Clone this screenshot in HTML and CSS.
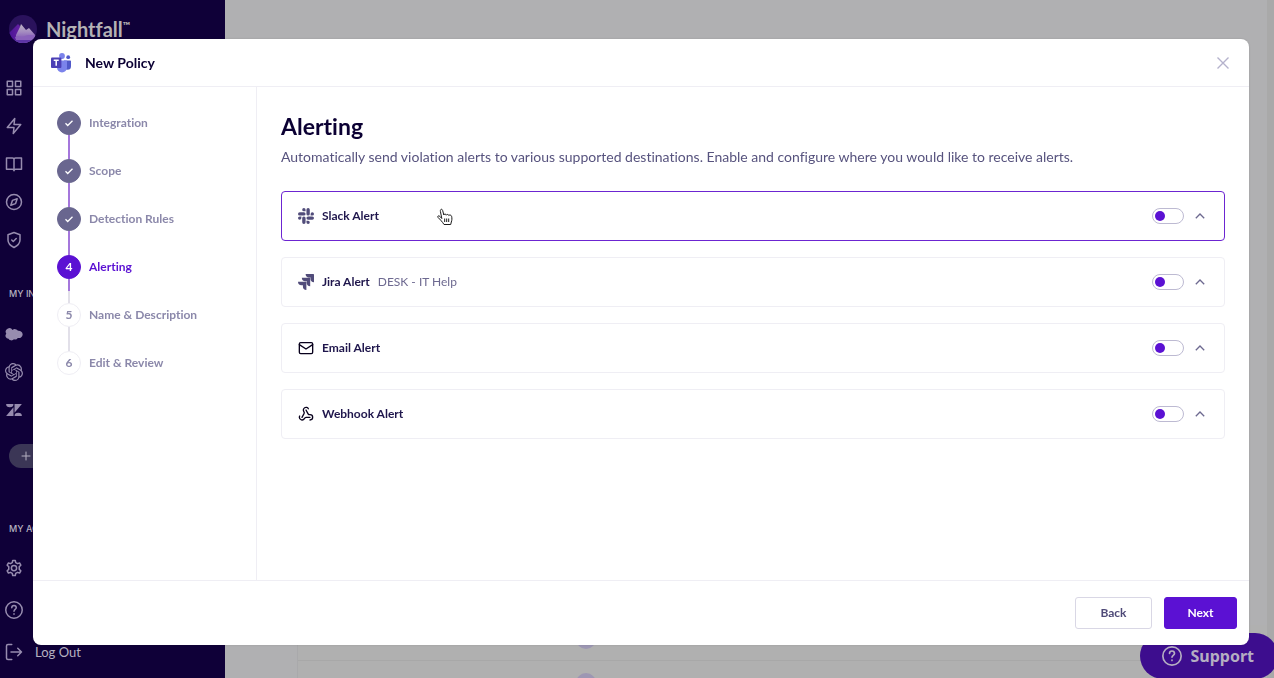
FILE: index.html
```html
<!DOCTYPE html>
<html lang="en">
<head>
<meta charset="utf-8">
<meta name="viewport" content="width=device-width, initial-scale=1">
<title>Nightfall – New Policy</title>
<link rel="stylesheet" href="styles.css">
</head>
<body>
<div class="app">
  <aside class="sidebar">
    <a class="brand" href="#">
      <svg class="brand-mark" viewBox="0 0 28 28" aria-hidden="true">
        <defs>
          <clipPath id="disc"><circle cx="14" cy="14" r="14"/></clipPath>
          <linearGradient id="peak" x1="0" y1="0" x2="0" y2="1"><stop offset="0" stop-color="#bdb5c4"/><stop offset="0.5" stop-color="#a48bc0"/><stop offset="1" stop-color="#7d4fb4"/></linearGradient>
          <linearGradient id="ridge" x1="0" y1="0" x2="1" y2="0"><stop offset="0" stop-color="#4a1596"/><stop offset="1" stop-color="#7a2bab"/></linearGradient>
        </defs>
        <g clip-path="url(#disc)">
          <rect width="28" height="28" fill="#2a125c"/>
          <path d="M0 18 9 9l3 3 8 6v10H0z" fill="url(#ridge)"/>
          <path d="m7 20 4-8 1-3 5 6 3-2 7 8-1 4H7z" fill="url(#peak)"/>
          <path d="M6 22c4-2 6 1 10-1s6 0 10-1l-1 8H8z" fill="#8a62bb"/>
          <path d="M6 25h19v3H6z" fill="#5d35a5"/>
        </g>
      </svg>
      <span class="brand-name">Nightfall<span class="tm">™</span></span>
    </a>
    <nav class="nav" aria-label="Main">
      <a href="#" aria-label="Dashboard"><svg class="icon" viewBox="0 0 24 24"><rect x="3" y="3" width="7" height="7"/><rect x="14" y="3" width="7" height="7"/><rect x="14" y="14" width="7" height="7"/><rect x="3" y="14" width="7" height="7"/></svg></a>
      <a href="#" aria-label="Activity"><svg class="icon" viewBox="0 0 24 24"><path d="M13 2 3 14h9l-1 8 10-12h-9l1-8z"/></svg></a>
      <a href="#" aria-label="Library"><svg class="icon" viewBox="0 0 24 24"><path d="M12 6a2 2 0 0 0-2-2H2v15h8a2 2 0 0 1 2 2 2 2 0 0 1 2-2h8V4h-8a2 2 0 0 0-2 2zv15"/></svg></a>
      <a href="#" aria-label="Discover"><svg class="icon" viewBox="0 0 24 24"><circle cx="12" cy="12" r="10"/><path d="m16.240 7.760-2.120 6.360-6.360 2.120 2.120-6.360z"/></svg></a>
      <a href="#" aria-label="Protection"><svg class="icon" viewBox="0 0 24 24"><path d="M12 22s8-4 8-10V5l-8-3-8 3v7c0 6 8 10 8 10zM9 12l2 2 4-4"/></svg></a>
    </nav>
    <h2 class="nav-title">MY IN</h2>
    <nav class="nav nav-integrations" aria-label="Integrations">
      <a href="#" aria-label="Salesforce"><svg class="icon icon-fill" viewBox="0 0 24 24"><path d="M10 6.500A5 5 0 0 1 17.300 7.800 5.200 5.200 0 0 1 23.500 12a5 5 0 0 1-6.500 5.200 4 4 0 0 1-5 1.800 4.500 4.500 0 0 1-7.300-.8A4 4 0 0 1 1.700 11.500 4.700 4.700 0 0 1 10 6.500z"/></svg></a>
      <a href="#" aria-label="OpenAI"><svg class="icon icon-fill" viewBox="0 0 24 24"><path d="M22.2819 9.8211a5.9847 5.9847 0 0 0-.5157-4.9108 6.0462 6.0462 0 0 0-6.5098-2.9A6.0651 6.0651 0 0 0 4.9807 4.1818a5.9847 5.9847 0 0 0-3.9977 2.9 6.0462 6.0462 0 0 0 .7427 7.0966 5.98 5.98 0 0 0 .511 4.9107 6.051 6.051 0 0 0 6.5146 2.9001A5.9847 5.9847 0 0 0 13.2599 24a6.0557 6.0557 0 0 0 5.7718-4.2058 5.9894 5.9894 0 0 0 3.9977-2.9001 6.0557 6.0557 0 0 0-.7475-7.0729zm-9.022 12.6081a4.4755 4.4755 0 0 1-2.8764-1.0408l.1419-.0804 4.7783-2.7582a.7948.7948 0 0 0 .3927-.6813v-6.7369l2.02 1.1686a.071.071 0 0 1 .038.052v5.5826a4.504 4.504 0 0 1-4.4945 4.4944zm-9.6607-4.1254a4.4708 4.4708 0 0 1-.5346-3.0137l.142.0852 4.783 2.7582a.7712.7712 0 0 0 .7806 0l5.8428-3.3685v2.3324a.0804.0804 0 0 1-.0332.0615L9.74 19.9502a4.4992 4.4992 0 0 1-6.1408-1.6464zM2.3408 7.8956a4.485 4.485 0 0 1 2.3655-1.9728V11.6a.7664.7664 0 0 0 .3879.6765l5.8144 3.3543-2.0201 1.1685a.0757.0757 0 0 1-.071 0l-4.8303-2.7865A4.504 4.504 0 0 1 2.3408 7.872zm16.5963 3.8558L13.1038 8.364 15.1192 7.2a.0757.0757 0 0 1 .071 0l4.8303 2.7913a4.4944 4.4944 0 0 1-.6765 8.1042v-5.6772a.79.79 0 0 0-.407-.667zm2.0107-3.0231l-.142-.0852-4.7735-2.7818a.7759.7759 0 0 0-.7854 0L9.409 9.2297V6.8974a.0662.0662 0 0 1 .0284-.0615l4.8303-2.7866a4.4992 4.4992 0 0 1 6.6802 4.66zM8.3065 12.863l-2.02-1.1638a.0804.0804 0 0 1-.038-.0567V6.0742a4.4992 4.4992 0 0 1 7.3757-3.4537l-.142.0805L8.704 5.459a.7948.7948 0 0 0-.3927.6813zm1.0976-2.3654l2.602-1.4998 2.6069 1.4998v2.9994l-2.5974 1.4997-2.6067-1.4997Z"/></svg></a>
      <a href="#" aria-label="Zendesk"><svg class="icon icon-fill" viewBox="0 0 24 24"><path d="M11.300 8.200V20H1.500zM11.300 4a4.900 4.400 0 0 1-9.800 0zM12.700 20a4.900 4.400 0 0 1 9.800 0zM12.700 15.800V4h9.800z"/></svg></a>
    </nav>
    <button class="add" type="button" aria-label="Add integration"><svg class="icon" viewBox="0 0 24 24"><path d="M12 4v16M4 12h16"/></svg></button>
    <h2 class="nav-title">MY AC</h2>
    <nav class="nav nav-account" aria-label="Account">
      <a href="#" aria-label="Settings"><svg class="icon" viewBox="0 0 24 24"><circle cx="12" cy="12" r="3.500"/><path d="M9.700 4.800 10.300 2h3.400l.6 2.800 2.400 1.400 2.700-.9 1.700 3-2.100 1.900v3.600l2.100 1.900-1.700 3-2.700-.9-2.400 1.400-.6 2.800h-3.400l-.6-2.800-2.400-1.400-2.700.9-1.700-3L5 13.800v-3.600L2.900 8.300l1.700-3 2.700.9z"/></svg></a>
      <a href="#" aria-label="Help"><svg class="icon" viewBox="0 0 24 24"><circle cx="12" cy="12" r="11"/><path d="M9 9a3 3 0 0 1 6 0c0 2-3 2.500-3 4.500M12 17v.5"/></svg></a>
      <a href="#"><svg class="icon" viewBox="0 0 24 24"><path d="M9 2H4a2 2 0 0 0-2 2v16a2 2 0 0 0 2 2h5M8 12h14M17 7l5 5-5 5"/></svg><span>Log Out</span></a>
    </nav>
  </aside>
  <main class="page">
    <div class="page-table" aria-hidden="true">
      <div class="page-row"><i class="avatar"></i></div>
      <div class="page-row"><i class="avatar"></i></div>
    </div>
  </main>
  <button class="support" type="button">
    <svg class="icon" viewBox="0 0 24 24"><circle cx="12" cy="12" r="11"/><path d="M9 9a3 3 0 0 1 6 0c0 2-3 2.500-3 4.500M12 17v.5"/></svg>
    <span>Support</span>
  </button>
</div>

<div class="overlay">
  <section class="modal" role="dialog" aria-modal="true" aria-labelledby="modal-title">
    <header class="modal-header">
      <svg class="teams" viewBox="0 0 20 20" aria-hidden="true">
        <circle cx="17.200" cy="4.200" r="1.900" fill="#5059c9"/>
        <path d="M13 7.500h6.300a.7.7 0 0 1 .7.700v5a3.500 3.500 0 0 1-7 0z" fill="#5059c9"/>
        <circle cx="11" cy="3" r="2.900" fill="#7b83eb"/>
        <path d="M6 7.500h9.300a.7.7 0 0 1 .7.700v6.300a5 5 0 0 1-10 0z" fill="#7b83eb"/>
        <rect y="4.600" width="10.400" height="10.400" rx="1" fill="#4b3fb5"/>
        <path d="M2.700 7.200h5M5.200 7.200v5.600" stroke="#fff" stroke-width="1.500" fill="none"/>
      </svg>
      <h1 id="modal-title">New Policy</h1>
      <button class="close" type="button" aria-label="Close"><svg viewBox="0 0 12 12"><path d="m0.500 0.500 11 11M11.500 0.500l-11 11"/></svg></button>
    </header>
    <div class="modal-body">
      <ol class="steps">
        <li class="step done"><span class="dot"><svg viewBox="0 0 10 10"><path d="m1.500 5.300 2.200 2.200 4.800-4.800"/></svg></span>Integration</li>
        <li class="step done"><span class="dot"><svg viewBox="0 0 10 10"><path d="m1.500 5.300 2.200 2.200 4.800-4.800"/></svg></span>Scope</li>
        <li class="step done"><span class="dot"><svg viewBox="0 0 10 10"><path d="m1.500 5.300 2.200 2.200 4.800-4.800"/></svg></span>Detection Rules</li>
        <li class="step current" aria-current="step"><span class="dot">4</span>Alerting</li>
        <li class="step"><span class="dot">5</span>Name &amp; Description</li>
        <li class="step"><span class="dot">6</span>Edit &amp; Review</li>
      </ol>
      <div class="content">
        <h2>Alerting</h2>
        <p class="intro">Automatically send violation alerts to various supported destinations. Enable and configure where you would like to receive alerts.</p>
        <div class="cards">
          <div class="card hover">
            <svg class="card-icon slate" viewBox="0 0 24 24"><path d="M5.042 15.165a2.528 2.528 0 0 1-2.520 2.523A2.528 2.528 0 0 1 0 15.165a2.527 2.527 0 0 1 2.522-2.520h2.520v2.520zM6.313 15.165a2.527 2.527 0 0 1 2.521-2.520 2.527 2.527 0 0 1 2.521 2.520v6.313A2.528 2.528 0 0 1 8.834 24a2.528 2.528 0 0 1-2.521-2.522v-6.313zM8.834 5.042a2.528 2.528 0 0 1-2.521-2.520A2.528 2.528 0 0 1 8.834 0a2.528 2.528 0 0 1 2.521 2.522v2.520H8.834zM8.834 6.313a2.528 2.528 0 0 1 2.521 2.521 2.528 2.528 0 0 1-2.521 2.521H2.522A2.528 2.528 0 0 1 0 8.834a2.528 2.528 0 0 1 2.522-2.521h6.312zM18.956 8.834a2.528 2.528 0 0 1 2.522-2.521A2.528 2.528 0 0 1 24 8.834a2.528 2.528 0 0 1-2.522 2.521h-2.522V8.834zM17.688 8.834a2.528 2.528 0 0 1-2.523 2.521 2.527 2.527 0 0 1-2.520-2.521V2.522A2.527 2.527 0 0 1 15.165 0a2.528 2.528 0 0 1 2.523 2.522v6.312zM15.165 18.956a2.528 2.528 0 0 1 2.523 2.522A2.528 2.528 0 0 1 15.165 24a2.527 2.527 0 0 1-2.520-2.522v-2.522h2.520zM15.165 17.688a2.527 2.527 0 0 1-2.520-2.523 2.526 2.526 0 0 1 2.520-2.520h6.313A2.527 2.527 0 0 1 24 15.165a2.528 2.528 0 0 1-2.522 2.523h-6.313z"/></svg>
            <label for="slack">Slack Alert</label>
            <input class="toggle" type="checkbox" role="switch" id="slack">
            <button class="chevron" type="button" aria-label="Collapse Slack Alert"><svg viewBox="0 0 10 6"><path d="m0.800 5.300 4.200-4.300 4.200 4.300"/></svg></button>
            <svg class="pointer" viewBox="0 0 16 18" aria-hidden="true"><path d="M4.800 10.500 3.400 3.400C3 1 5.200.5 5.700 2.600L6.800 7c.3-1.300 2.300-1.300 2.500.2.500-1.200 2.300-.9 2.500.3.700-1 2.500-.4 2.800.8.500 2 .4 4-.3 5.700l-.6 2.500H7c-.8-1.600-2-2.600-3.300-4.300L1 9.400C.2 8 1.800 7.200 2.800 8.300z"/><path d="M7.700 10.500v3.500M9.700 10.500v3.500M11.700 10.500v3.500"/></svg>
          </div>
          <div class="card">
            <svg class="card-icon slate" viewBox="0 0 24 24"><path d="M11.571 11.513H0a5.218 5.218 0 0 0 5.232 5.215h2.130v2.057A5.215 5.215 0 0 0 12.575 24V12.518a1.005 1.005 0 0 0-1.005-1.005zm5.723-5.756H5.736a5.215 5.215 0 0 0 5.215 5.214h2.129v2.058a5.218 5.218 0 0 0 5.215 5.214V6.758a1.001 1.001 0 0 0-1.001-1.001zM23.013 0H11.455a5.215 5.215 0 0 0 5.215 5.215h2.129v2.057A5.215 5.215 0 0 0 24 12.483V1.005A1.001 1.001 0 0 0 23.013 0Z"/></svg>
            <label for="jira">Jira Alert</label>
            <span class="detail">DESK - IT Help</span>
            <input class="toggle" type="checkbox" role="switch" id="jira">
            <button class="chevron" type="button" aria-label="Collapse Jira Alert"><svg viewBox="0 0 10 6"><path d="m0.800 5.300 4.200-4.300 4.200 4.300"/></svg></button>
          </div>
          <div class="card">
            <svg class="card-icon line" viewBox="0 0 24 24"><rect x="2" y="4" width="20" height="16.500" rx="2"/><path d="m2 7 10 6.500L22 7"/></svg>
            <label for="email">Email Alert</label>
            <input class="toggle" type="checkbox" role="switch" id="email">
            <button class="chevron" type="button" aria-label="Collapse Email Alert"><svg viewBox="0 0 10 6"><path d="m0.800 5.300 4.200-4.300 4.200 4.300"/></svg></button>
          </div>
          <div class="card">
            <svg class="card-icon line" viewBox="0 0 24 24"><path d="M18 16.980h-5.990c-1.100 0-1.950.94-2.480 1.900A4 4 0 0 1 2 17c.01-.7.200-1.400.57-2M6 17l3.130-5.780c.53-.97.100-2.180-.5-3.100a4 4 0 1 1 6.890-4.060M12 6l3.130 5.730C15.660 12.700 16.900 13 18 13a4 4 0 0 1 0 8"/></svg>
            <label for="webhook">Webhook Alert</label>
            <input class="toggle" type="checkbox" role="switch" id="webhook">
            <button class="chevron" type="button" aria-label="Collapse Webhook Alert"><svg viewBox="0 0 10 6"><path d="m0.800 5.300 4.200-4.300 4.200 4.300"/></svg></button>
          </div>
        </div>
      </div>
    </div>
    <footer class="modal-footer">
      <button class="btn" type="button">Back</button>
      <button class="btn primary" type="button">Next</button>
    </footer>
  </section>
</div>
</body>
</html>
```
FILE: styles.css
```css
:root {
  --accent: #5b11d3;
  --ink: #0b0033;
  --slate: #57537e;
  --muted: #8b88aa;
  --rule: #efeef4;
  --night: #0f0038;
  --dim: #978caf;
}

* { box-sizing: border-box; }

body {
  margin: 0;
  font-family: Lato, "Open Sans", sans-serif;
  font-size: 12px;
  font-variant-ligatures: none;
  line-height: 16px;
  color: var(--ink);
}

h1, h2, p, ol { margin: 0; padding: 0; }
button { font: inherit; cursor: pointer; }
a { color: inherit; text-decoration: none; }
svg { display: block; flex: none; }

/* Dimmed application behind the dialog */
.app {
  display: flex;
  height: 100vh;
  overflow: hidden;
  background: #b0b0b2;
}

.sidebar {
  width: 225px;
  flex: none;
  padding-top: 15px;
  background: var(--night);
  color: #b5b0c0;
}

.brand {
  display: flex;
  align-items: center;
  gap: 9px;
  padding-left: 9px;
  margin-bottom: 26px;
}

.brand-mark { width: 28px; height: 28px; }

.brand-name {
  display: flex;
  font-size: 20px;
  font-weight: 700;
  line-height: 26px;
  color: #b3b1b4;
}

.tm { font-size: 10px; line-height: 18px; }

.nav a {
  display: flex;
  align-items: center;
  gap: 12px;
  height: 38px;
  padding-left: 5px;
  font-size: 13px;
}

.nav-integrations { padding-top: 3px; }
.nav-account a { height: 42px; }

.icon {
  width: 18px;
  height: 18px;
  fill: none;
  stroke: var(--dim);
  stroke-width: 2;
  stroke-linejoin: round;
  stroke-linecap: round;
}

.icon-fill { fill: var(--dim); stroke: none; }

.nav-title {
  padding: 27px 0 10px 9px;
  font-family: Inter, sans-serif;
  font-size: 9px;
  font-weight: 500;
  line-height: 16px;
}

.add {
  display: flex;
  align-items: center;
  width: 120px;
  height: 24px;
  margin: 15px 0 26px 9px;
  padding: 0 11px;
  border: 0;
  border-radius: 12px;
  background: #3b3656;
}

.add .icon { width: 12px; height: 12px; stroke: #b5b0c0; }

.page {
  flex: 1;
  display: flex;
  flex-direction: column;
  justify-content: flex-end;
  padding-left: 72px;
  border-right: 7px solid #a9a9a9;
}

.page-table {
  border-left: 1px solid #a9a9ab;
  background: #b0b0b0;
}

.page-row {
  height: 36px;
  padding: 0 278px;
  border-bottom: 1px solid #a8a8a8;
}

.page-row:last-child { height: 17px; padding-top: 12px; border-bottom: 0; overflow: hidden; }

.avatar {
  display: block;
  width: 20px;
  height: 24px;
  border-radius: 10px;
  background: #9d97b3;
}

.support {
  position: fixed;
  right: -4px;
  bottom: -1px;
  display: flex;
  align-items: center;
  gap: 8px;
  height: 46px;
  padding: 0 24px 0 22px;
  border: 0;
  border-radius: 23px;
  background: #3d0d8e;
  color: #b5aec2;
  font-family: "Noto Sans", sans-serif;
  font-size: 16px;
  font-weight: 700;
}

.support .icon { width: 20px; height: 20px; stroke: #b5aec2; }

/* Dialog */
.overlay {
  position: fixed;
  inset: 0;
  display: flex;
  padding: 39px 25px 33px 33px;
}

.modal {
  flex: 1;
  min-width: 0;
  display: flex;
  flex-direction: column;
  border-radius: 8px;
  background: #fff;
  box-shadow: 0 0 2px rgba(0, 0, 0, 0.15);
}

.modal-header {
  display: flex;
  align-items: center;
  height: 48px;
  padding: 0 20px 0 18px;
  border-bottom: 1px solid var(--rule);
}

.teams { width: 20px; height: 20px; margin-right: 14px; }
.modal-header h1 { font-size: 14px; font-weight: 700; line-height: 20px; }

.close {
  margin-left: auto;
  padding: 0;
  border: 0;
  background: none;
}

.close svg { width: 12px; height: 12px; fill: none; stroke: #b5b2cc; stroke-width: 1.4; }

.modal-body { flex: 1; display: flex; min-height: 0; }

.steps {
  width: 224px;
  flex: none;
  padding: 24px;
  border-right: 1px solid var(--rule);
  list-style: none;
  font-weight: 700;
  color: var(--muted);
}

.step {
  position: relative;
  display: flex;
  align-items: center;
  gap: 8px;
  height: 24px;
  margin-bottom: 24px;
}

.step + .step::before {
  content: "";
  position: absolute;
  left: 11px;
  bottom: 24px;
  width: 2px;
  height: 24px;
  background: #a577dc;
}

.step.current + .step::before { background: linear-gradient(#a577dc 50%, #e2e0e9 50%); }
.step.current + .step + .step::before { background: #e2e0e9; }

.dot {
  display: grid;
  place-items: center;
  width: 24px;
  height: 24px;
  border: 1px solid var(--rule);
  border-radius: 50%;
  background: #fff;
}

.dot svg { width: 10px; height: 10px; fill: none; stroke: #fff; stroke-width: 1.3; }
.done .dot { border-color: #69668f; background: #69668f; }
.current { color: var(--accent); }
.current .dot { border-color: var(--accent); background: var(--accent); color: #fff; }

.content { flex: 1; min-width: 0; padding: 24px; }
.content h2 { font-size: 23px; font-weight: 700; line-height: 30px; }

.intro {
  margin: 6px 0 24px;
  font-size: 14px;
  line-height: 20px;
  color: var(--slate);
}

.cards { display: grid; gap: 16px; }

.card {
  position: relative;
  display: flex;
  align-items: center;
  height: 50px;
  padding: 0 19px 0 16px;
  border: 1px solid var(--rule);
  border-radius: 4px;
}

.card.hover { border-color: #6c25d1; }
.card label { margin-left: 8px; font-weight: 700; color: #1f164c; }
.card-icon { width: 16px; height: 16px; }
.slate { fill: #514c7a; }
.line { fill: none; stroke: #08001c; stroke-width: 2; stroke-linecap: round; stroke-linejoin: round; }
.detail { margin-left: 8px; color: #6d6990; }

.toggle {
  appearance: none;
  width: 32px;
  height: 16px;
  margin: 0 11px 0 auto;
  padding: 2px;
  border: 1px solid #bdbad2;
  border-radius: 8px;
  background: #fff;
}

.toggle::before {
  content: "";
  display: block;
  width: 10px;
  height: 10px;
  border-radius: 50%;
  background: var(--accent);
}

.toggle:checked::before { margin-left: auto; }

.chevron { padding: 0; border: 0; background: none; }
.chevron svg { width: 10px; height: 6px; fill: none; stroke: #6d6990; stroke-width: 1.3; }

.pointer {
  position: absolute;
  left: 155px;
  top: 16px;
  width: 16px;
  height: 18px;
  fill: #fff;
  stroke: #1b1b1b;
}

.modal-footer {
  display: flex;
  justify-content: flex-end;
  gap: 12px;
  padding: 16px 12px;
  border-top: 1px solid var(--rule);
}

.btn {
  min-width: 77px;
  height: 32px;
  padding: 0 16px;
  border: 1px solid #d9d7e5;
  border-radius: 3px;
  background: #fff;
  color: #4f4a78;
  font-weight: 700;
}

.btn.primary { min-width: 73px; border-color: var(--accent); background: var(--accent); color: #fff; }
```
